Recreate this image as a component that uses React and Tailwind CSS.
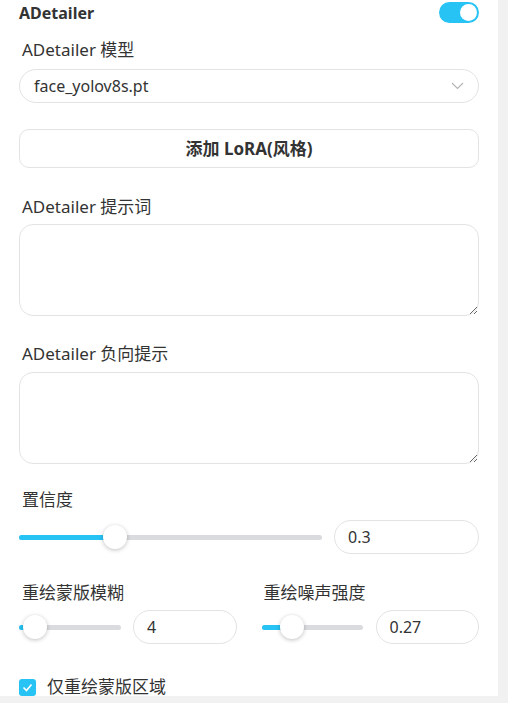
import React from "react";

const font = { fontFamily: '"Noto Sans", "Noto Sans CJK SC", sans-serif' };

function Slider({ pct, className = "" }) {
  return (
    <div className={`relative h-[5px] rounded-full bg-[#dadbdf] ${className}`}>
      <div className="absolute left-0 top-0 h-full rounded-full bg-[#27c3f5]" style={{ width: `${pct}%` }} />
      <div
        className="absolute top-1/2 h-[24px] w-[24px] -translate-x-1/2 -translate-y-1/2 rounded-full bg-white shadow-[0_1px_4px_rgba(0,0,0,0.25)]"
        style={{ left: `${pct}%` }}
      />
    </div>
  );
}

function NumberBox({ value, className = "" }) {
  return (
    <div className={`flex h-[34px] items-center rounded-[17px] border border-[#e3e3e3] pl-[13px] text-[16px] text-[#333] ${className}`}>
      {value}
    </div>
  );
}

export default function App() {
  return (
    <div className="flex h-[703px] w-[508px] flex-col overflow-hidden bg-white" style={font}>
      <div className="flex h-[696px] overflow-hidden">
        <div className="w-[498px] px-[19px]">
          {/* Header */}
          <div className="flex h-[25px] items-center justify-between">
            <span className="text-[16px] font-bold text-[#333]">ADetailer</span>
            <div className="flex h-[21px] w-[40px] items-center justify-end rounded-full bg-[#27c3f5] pr-[2px]">
              <div className="h-[17px] w-[17px] rounded-full bg-white" />
            </div>
          </div>

          {/* Model */}
          <div className="mt-[13px] pl-[3px] text-[17px] leading-[24px] text-[#333]">ADetailer 模型</div>
          <div className="mt-[7px] flex h-[34px] items-center justify-between rounded-[17px] border border-[#e3e3e3] pl-[14px] pr-[14px] text-[16px] text-[#333]">
            <span>face_yolov8s.pt</span>
            <svg width="13" height="8" viewBox="0 0 13 8" fill="none">
              <path d="M1 1l5.5 5.5L12 1" stroke="#b5b5b5" strokeWidth="1.2" />
            </svg>
          </div>

          <button className="mt-[26px] flex h-[39px] w-full items-center justify-center rounded-[10px] border border-[#e3e3e3] bg-white text-[17px] font-bold text-[#333]">
            添加 LoRA(风格)
          </button>

          {/* Prompt */}
          <div className="mt-[27px] pl-[3px] text-[17px] leading-[24px] text-[#333]">ADetailer 提示词</div>
          <textarea className="mt-[5px] block h-[92px] w-full resize-y rounded-[14px] border border-[#e3e3e3] outline-none" />

          {/* Negative */}
          <div className="mt-[26px] pl-[3px] text-[17px] leading-[24px] text-[#333]">ADetailer 负向提示</div>
          <textarea className="mt-[6px] block h-[92px] w-full resize-y rounded-[14px] border border-[#e3e3e3] outline-none" />

          {/* Confidence */}
          <div className="mt-[24px] pl-[3px] text-[17px] leading-[24px] text-[#333]">置信度</div>
          <div className="mt-[8px] flex items-center gap-[12px]">
            <Slider pct={31.7} className="w-[303px]" />
            <NumberBox value="0.3" className="flex-1" />
          </div>

          {/* Two columns */}
          <div className="mt-[27px] grid grid-cols-2 gap-x-[25px]">
            <div>
              <div className="pl-[3px] text-[17px] leading-[24px] text-[#333]">重绘蒙版模糊</div>
              <div className="mt-[5px] flex items-center gap-[12px]">
                <Slider pct={15.7} className="w-[102px]" />
                <NumberBox value="4" className="flex-1" />
              </div>
            </div>
            <div>
              <div className="pl-[2px] text-[17px] leading-[24px] text-[#333]">重绘噪声强度</div>
              <div className="mt-[5px] flex items-center gap-[13px]">
                <Slider pct={30.5} className="w-[101px]" />
                <NumberBox value="0.27" className="flex-1" />
              </div>
            </div>
          </div>

          {/* Checkbox */}
          <div className="mt-[34px] flex items-center gap-[11px]">
            <div className="flex h-[17px] w-[17px] shrink-0 items-center justify-center rounded-[3px] bg-[#27c3f5]">
              <svg width="11" height="9" viewBox="0 0 11 9" fill="none">
                <path d="M1.5 4.5l3 3L9.5 1.5" stroke="white" strokeWidth="1.6" />
              </svg>
            </div>
            <span className="text-[17px] leading-[18px] text-[#333]">仅重绘蒙版区域</span>
          </div>
        </div>
        <div className="w-[10px] bg-[#f1f1f1]" />
      </div>
      <div className="h-[7px] bg-[#f1f1f1]" />
    </div>
  );
}
